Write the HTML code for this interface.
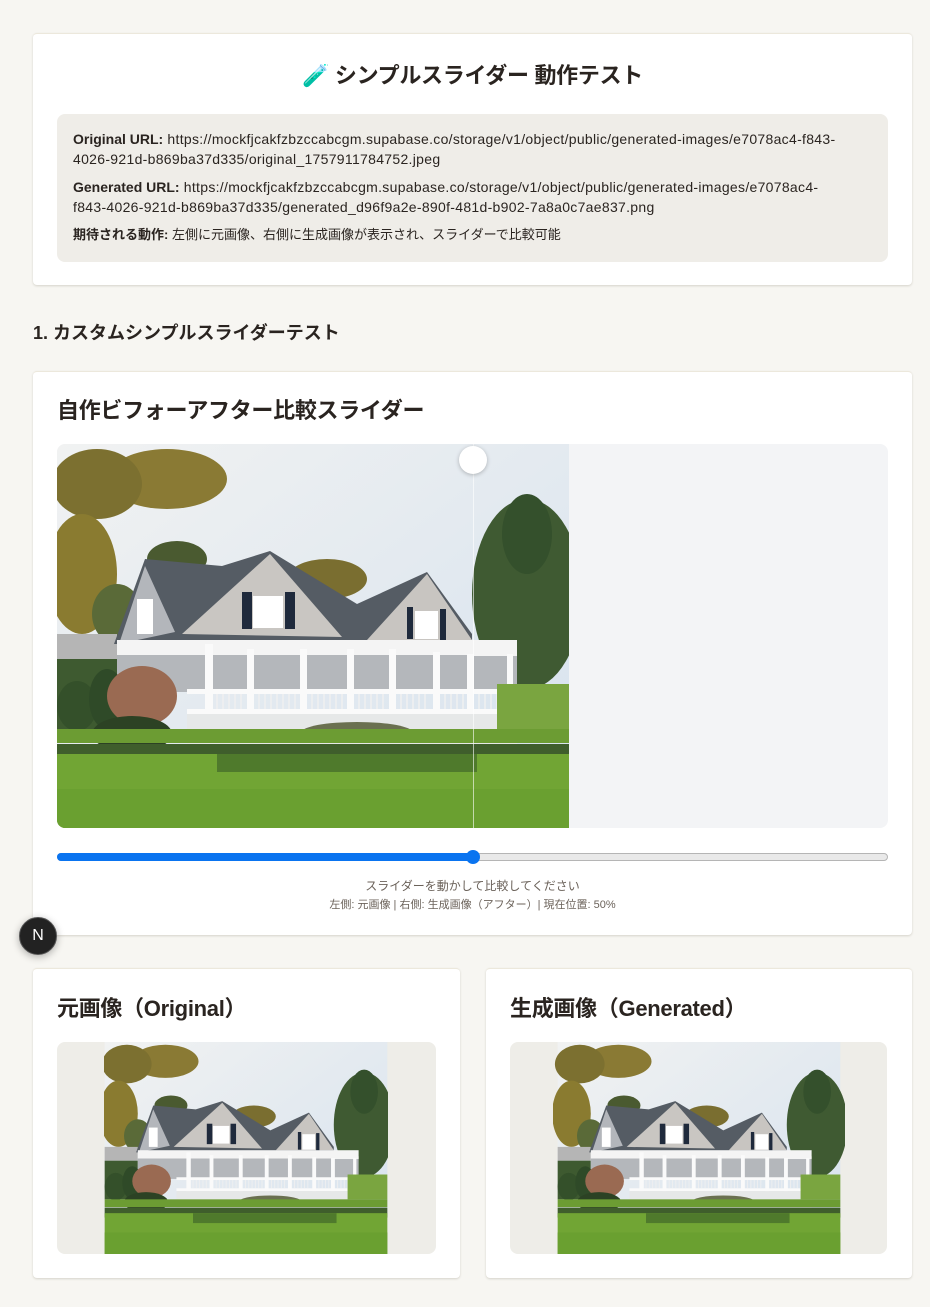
<!DOCTYPE html>
<html><head><meta charset="utf-8">
<style>
*{box-sizing:border-box;margin:0;padding:0}
body{width:930px;height:1307px;background:#f7f6f2;font-family:"Liberation Sans","Noto Sans CJK JP",sans-serif;color:#2a2420;position:relative;overflow:hidden}
.card{position:absolute;background:#fff;border-radius:4px;box-shadow:0 1px 2px rgba(60,50,30,.18);border-top:1px solid #ece8dc}
h1{position:absolute;left:0;right:0;top:24px;text-align:center;font-size:22px;font-weight:bold;letter-spacing:-0.3px}
.info{position:absolute;left:24px;top:80px;width:831px;height:148px;background:#efede8;border-radius:8px;padding:15px 16px;font-size:14px;line-height:20px;color:#2a2420;letter-spacing:0.3px;white-space:nowrap}
.info p{margin-bottom:8px}
.info b{font-weight:bold;letter-spacing:0}
h2{position:absolute;font-size:22px;font-weight:bold;letter-spacing:-0.3px}
.sec{position:absolute;left:33px;top:319px;font-size:18px;font-weight:bold}
svg{display:block}
</style></head><body>
<svg width="0" height="0" style="position:absolute">
<defs>
<linearGradient id="sky" x1="0" y1="0" x2="1" y2="1"><stop offset="0" stop-color="#f1f2f2"/><stop offset="1" stop-color="#d6e2ee"/></linearGradient>
<symbol id="scene" viewBox="0 0 512 384">
<rect width="512" height="384" fill="url(#sky)"/>
<ellipse cx="110" cy="35" rx="60" ry="30" fill="#8a7a34"/>
<ellipse cx="40" cy="40" rx="45" ry="35" fill="#7c7030"/>
<ellipse cx="25" cy="130" rx="35" ry="60" fill="#8a7b30"/>
<ellipse cx="120" cy="115" rx="30" ry="18" fill="#4a5a30"/>
<ellipse cx="270" cy="135" rx="40" ry="20" fill="#7a6e30"/>
<ellipse cx="60" cy="170" rx="25" ry="30" fill="#5a6a38"/>
<rect x="0" y="190" width="60" height="25" fill="#b5b5b5"/>
<rect x="0" y="215" width="60" height="70" fill="#3e5a30"/>
<ellipse cx="470" cy="150" rx="55" ry="95" fill="#3f5a32"/>
<ellipse cx="470" cy="90" rx="25" ry="40" fill="#34502c"/>
<polygon points="57,200 88,115 165,122 213,107 300,160 370,128 415,190 415,200" fill="#555c64"/>
<polygon points="62,200 88,122 118,188" fill="#b3b6bb"/>
<polygon points="125,190 213,110 285,193" fill="#c9c6c2"/>
<polygon points="310,196 370,130 415,196" fill="#c8c5c1"/>
<rect x="185" y="148" width="10" height="37" fill="#1f2a3c"/>
<rect x="228" y="148" width="10" height="37" fill="#1f2a3c"/>
<rect x="196" y="152" width="30" height="32" fill="#fff"/>
<rect x="350" y="163" width="6" height="32" fill="#1f2a3c"/>
<rect x="383" y="165" width="6" height="32" fill="#1f2a3c"/>
<rect x="358" y="167" width="23" height="28" fill="#fff"/>
<rect x="80" y="155" width="16" height="35" fill="#fff"/>
<rect x="60" y="196" width="400" height="15" fill="#f4f4f4"/>
<rect x="60" y="211" width="400" height="37" fill="#b4b7bb"/>
<rect x="415" y="207" width="45" height="5" fill="#f4f4f4"/>
<g fill="#fafafa">
<rect x="148" y="200" width="8" height="100"/><rect x="190" y="205" width="7" height="95"/><rect x="243" y="205" width="7" height="95"/><rect x="290" y="205" width="7" height="95"/><rect x="332" y="205" width="7" height="95"/><rect x="376" y="208" width="7" height="90"/><rect x="410" y="210" width="7" height="88"/><rect x="450" y="210" width="6" height="85"/>
<rect x="130" y="245" width="330" height="5"/><rect x="130" y="265" width="330" height="5"/>
</g>
<g stroke="#f0f0f0" stroke-width="1.5">
<path d="M160 250V265M166 250V265M172 250V265M178 250V265M184 250V265M202 250V265M208 250V265M214 250V265M220 250V265M226 250V265M232 250V265M238 250V265M255 250V265M261 250V265M267 250V265M273 250V265M279 250V265M285 250V265M302 250V265M308 250V265M314 250V265M320 250V265M326 250V265M344 250V265M350 250V265M356 250V265M362 250V265M368 250V265M388 250V265M394 250V265M400 250V265M406 250V265M422 250V265M428 250V265M434 250V265M440 250V265M446 250V265"/>
</g>
<rect x="130" y="270" width="330" height="30" fill="#e6e8e8"/>
<ellipse cx="20" cy="262" rx="20" ry="25" fill="#34502a"/>
<ellipse cx="50" cy="255" rx="18" ry="30" fill="#2f4a28"/>
<ellipse cx="85" cy="252" rx="35" ry="30" fill="#9a6a52"/>
<ellipse cx="75" cy="290" rx="40" ry="18" fill="#2c4224"/>
<ellipse cx="300" cy="288" rx="55" ry="10" fill="#6a7050"/>
<rect x="440" y="240" width="72" height="45" fill="#7aa540"/>
<rect x="0" y="285" width="512" height="14" fill="#6c9c33"/>
<rect x="0" y="300" width="512" height="18" fill="#3f5e2c"/>
<rect x="0" y="310" width="512" height="74" fill="#71a534"/>
<rect x="160" y="310" width="260" height="18" fill="#4f7a2c"/>
<rect x="0" y="345" width="512" height="39" fill="#6aa030"/>
</symbol>
</defs></svg>

<div class="card" style="left:33px;top:33px;width:879px;height:252px">
<h1>🧪 シンプルスライダー 動作テスト</h1>
<div class="info">
<p><b>Original URL:</b> https://mockfjcakfzbzccabcgm.supabase.co/storage/v1/object/public/generated-images/e7078ac4-f843-<br>4026-921d-b869ba37d335/original_1757911784752.jpeg</p>
<p><b>Generated URL:</b> https://mockfjcakfzbzccabcgm.supabase.co/storage/v1/object/public/generated-images/e7078ac4-<br>f843-4026-921d-b869ba37d335/generated_d96f9a2e-890f-481d-b902-7a8a0c7ae837.png</p>
<p style="font-size:13px;letter-spacing:0"><b>期待される動作:</b> 左側に元画像、右側に生成画像が表示され、スライダーで比較可能</p>
</div>
</div>

<div class="sec">1. カスタムシンプルスライダーテスト</div>

<div class="card" style="left:33px;top:371px;width:879px;height:564px">
<h2 style="left:24px;top:21px">自作ビフォーアフター比較スライダー</h2>
<div style="position:absolute;left:24px;top:72px;width:831px;height:384px;background:#f3f4f6;border-radius:8px;overflow:hidden">
<svg width="512" height="384"><use href="#scene"/></svg>
<div style="position:absolute;left:416px;top:0;width:1px;height:384px;background:rgba(255,255,255,.6)"></div>
<div style="position:absolute;left:402px;top:2px;width:28px;height:28px;border-radius:50%;background:#fff;box-shadow:0 1px 4px rgba(0,0,0,.25)"></div>
</div>
<div style="position:absolute;left:24px;top:481px;width:831px;height:8px;border-radius:4px;background:#e9e9e9;border:1px solid #b5b5b5"></div>
<div style="position:absolute;left:24px;top:481px;width:416px;height:8px;border-radius:4px;background:#0a74f0"></div>
<div style="position:absolute;left:433px;top:478px;width:14px;height:14px;border-radius:50%;background:#0a74f0"></div>
<div style="position:absolute;left:0;right:0;top:505px;text-align:center;font-size:12px;color:#6b625a">スライダーを動かして比較してください</div>
<div style="position:absolute;left:0;right:0;top:524px;text-align:center;font-size:11px;color:#6b625a">左側: 元画像 | 右側: 生成画像（アフター）| 現在位置: 50%</div>
</div>

<div style="position:absolute;left:19px;top:917px;width:38px;height:38px;border-radius:50%;background:#222;border:1px solid #555;box-shadow:0 2px 8px rgba(0,0,0,.3);color:#fff;font-size:16px;line-height:36px;text-align:center">N</div>

<div class="card" style="left:33px;top:968px;width:427px;height:310px">
<h2 style="left:24px;top:22px">元画像（Original）</h2>
<div style="position:absolute;left:24px;top:73px;width:379px;height:212px;background:#eeede8;border-radius:8px;overflow:hidden">
<svg style="position:absolute;left:47px;top:0" width="284" height="212" preserveAspectRatio="none"><use href="#scene" width="284" height="212"/></svg>
</div>
</div>

<div class="card" style="left:486px;top:968px;width:426px;height:310px">
<h2 style="left:24px;top:22px">生成画像（Generated）</h2>
<div style="position:absolute;left:24px;top:73px;width:377px;height:212px;background:#eeede8;border-radius:8px;overflow:hidden">
<svg style="position:absolute;left:43px;top:0" width="292" height="212" preserveAspectRatio="none"><use href="#scene" width="292" height="212"/></svg>
</div>
</div>
</body></html>
